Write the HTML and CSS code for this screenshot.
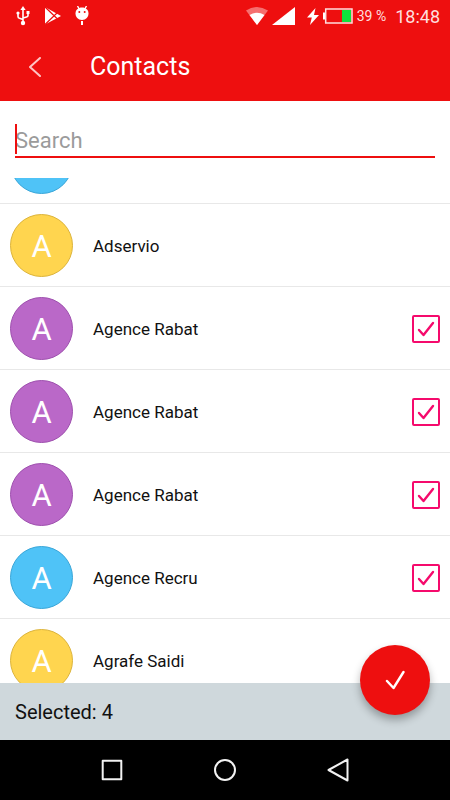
FILE: index.html
```
<!DOCTYPE html>
<html lang="en">
<head>
  <meta charset="UTF-8">
  <meta name="viewport" content="width=device-width, initial-scale=1.0">
  <title>Contacts</title>
  <link rel="stylesheet" href="styles.css">
</head>
<body>
  <header class="header">
    <!-- Status bar -->
    <div class="status-bar">
      <div class="status-left">
        <svg width="14" height="20" viewBox="0 0 14 20" fill="none" stroke="#fff" stroke-width="1.6">
          <path d="M7 3v14M2 7.500v3q0 1.500 1.500 1.800L7 13.500M12 7v2.500q0 1.200-1.500 1.500L7 12"/>
          <path d="M7 0l2.600 4H4.400z" fill="#fff" stroke="none"/>
          <circle cx="7" cy="17" r="2.200" fill="#fff" stroke="none"/>
          <circle cx="2" cy="7" r="1.600" fill="#fff" stroke="none"/>
          <path d="M10.500 5h3v3h-3z" fill="#fff" stroke="none"/>
        </svg>
        <svg width="17" height="20" viewBox="0 0 17 20">
          <path d="M1 1v17.500L17 10z" fill="#fff"/>
          <path d="M1 1l12 11.500M1 18.500L13 7" stroke="#ee0f0f" stroke-width="1.200"/>
        </svg>
        <svg width="14" height="20" viewBox="0 0 14 20">
          <path d="M2.500 0l2 3.500M11.500 0l-2 3.500" stroke="#fff" stroke-width="1.400"/>
          <path d="M7 1.500c4 0 6.500 2.500 6.500 6S11 14 7 14 .5 11 .5 7.500s2.500-6 6.500-6z" fill="#fff"/>
          <path d="M6 15h2v4H6z" fill="#fff"/>
          <circle cx="4.300" cy="6" r="1" fill="#ee0f0f"/>
          <circle cx="9.700" cy="6" r="1" fill="#ee0f0f"/>
        </svg>
      </div>
      <div class="status-right">
        <svg width="22" height="18" viewBox="0 0 22 18">
          <path d="M0 3.500Q11-3.500 22 3.500L11 18z" fill="#fff" opacity=".4"/>
          <path d="M3.500 8Q11 3.500 18.500 8L11 18z" fill="#fff"/>
        </svg>
        <svg width="23" height="18" viewBox="0 0 23 18">
          <path d="M23 0v18H0z" fill="#fff"/>
        </svg>
        <svg class="bolt" width="12" height="17" viewBox="0 0 12 17">
          <path d="M8.500 0L0 9.500h4.800L3 17l9-10H7z" fill="#fff"/>
        </svg>
        <svg width="30" height="16" viewBox="0 0 30 16">
          <path d="M0 4.500h3v7H0z" fill="#fff"/>
          <path d="M19 2h9v12h-9z" fill="#10e23c"/>
          <path d="M2.700 1h26.300v14H2.700z" fill="none" stroke="#ffdede" stroke-width="1.500"/>
        </svg>
        <span class="battery">39 %</span>
        <span class="time">18:48</span>
      </div>
    </div>
    <div class="toolbar">
      <button class="back" type="button" aria-label="Back">
        <svg width="12" height="20" viewBox="0 0 12 20" fill="none" stroke="#ffc4c4" stroke-width="2" stroke-linecap="round" stroke-linejoin="round">
          <path d="M11 1L1 10l10 9"/>
        </svg>
      </button>
      <h1>Contacts</h1>
    </div>
  </header>

  <div class="search">
    <div class="search-field">
      <input type="text" placeholder="Search" aria-label="Search">
    </div>
  </div>

  <!-- Contact list -->
  <main class="contacts">
    <ul class="contact-list">
      <li class="contact">
        <span class="avatar blue"></span>
      </li>
      <li class="contact">
        <span class="avatar yellow">A</span>
        <span class="name">Adservio</span>
      </li>
      <li class="contact">
        <span class="avatar purple">A</span>
        <label class="name" for="contact1">Agence Rabat</label>
        <span class="check">
          <input type="checkbox" id="contact1" checked>
          <svg viewBox="0 0 28 28"><path d="M7 15l4.500 5L21 8"/></svg>
        </span>
      </li>
      <li class="contact">
        <span class="avatar purple">A</span>
        <label class="name" for="contact2">Agence Rabat</label>
        <span class="check">
          <input type="checkbox" id="contact2" checked>
          <svg viewBox="0 0 28 28"><path d="M7 15l4.500 5L21 8"/></svg>
        </span>
      </li>
      <li class="contact">
        <span class="avatar purple">A</span>
        <label class="name" for="contact3">Agence Rabat</label>
        <span class="check">
          <input type="checkbox" id="contact3" checked>
          <svg viewBox="0 0 28 28"><path d="M7 15l4.500 5L21 8"/></svg>
        </span>
      </li>
      <li class="contact">
        <span class="avatar blue">A</span>
        <label class="name" for="contact4">Agence Recru</label>
        <span class="check">
          <input type="checkbox" id="contact4" checked>
          <svg viewBox="0 0 28 28"><path d="M7 15l4.500 5L21 8"/></svg>
        </span>
      </li>
      <li class="contact">
        <span class="avatar yellow">A</span>
        <span class="name">Agrafe Saidi</span>
      </li>
    </ul>
  </main>

  <div class="selected-bar">
    <span>Selected: 4</span>
    <button class="fab" type="button" aria-label="Confirm">
      <svg width="20" height="20" viewBox="0 0 20 20" fill="none" stroke="#fff" stroke-width="2.400" stroke-linecap="round" stroke-linejoin="round">
        <path d="M2 11l6.500 7L18.500 2"/>
      </svg>
    </button>
  </div>

  <!-- Android navigation -->
  <nav class="nav-bar">
    <button type="button" aria-label="Recent apps">
      <svg width="24" height="24" viewBox="0 0 24 24"><path d="M2.700 2.700h18.600v18.600H2.700z"/></svg>
    </button>
    <button type="button" aria-label="Home">
      <svg width="24" height="24" viewBox="0 0 24 24"><circle cx="12" cy="12" r="10"/></svg>
    </button>
    <button type="button" aria-label="Back">
      <svg width="24" height="24" viewBox="0 0 24 24"><path d="M21.500 1.500v21L2.500 12z"/></svg>
    </button>
  </nav>
</body>
</html>
```
FILE: styles.css
```
* {
  box-sizing: border-box;
}

body {
  margin: 0;
  height: 100vh;
  display: flex;
  flex-direction: column;
  font-family: Roboto, sans-serif;
  background: #fff;
  color: #111;
}

button {
  padding: 0;
  border: none;
  background: none;
  cursor: pointer;
}

svg {
  display: block;
}

.header {
  background: #ee0f0f;
  color: #fff;
}

/* Status bar */
.status-bar {
  display: flex;
  justify-content: space-between;
  align-items: center;
  height: 32px;
  padding: 0 10px 0 16px;
}

.status-left {
  display: flex;
  gap: 14px;
}

.status-right {
  display: flex;
  align-items: center;
  gap: 4px;
  color: #ffdede;
}

.bolt {
  margin-left: 8px;
}

.battery {
  font-size: 14px;
}

.time {
  margin-left: 5px;
  font-size: 18px;
}

/* Toolbar */
.toolbar {
  display: flex;
  align-items: center;
  height: 69px;
}

.back {
  display: flex;
  justify-content: center;
  width: 70px;
}

.toolbar h1 {
  margin: 0 0 0 20px;
  font-size: 25px;
  font-weight: 400;
}

/* Search */
.search {
  padding: 20px 15px;
}

.search-field {
  position: relative;
  border-bottom: 2px solid #ee0f0f;
}

/* text cursor */
.search-field::before {
  content: "";
  position: absolute;
  left: 0;
  top: 3px;
  width: 2px;
  height: 30px;
  background: #ee0f0f;
}

.search input {
  display: block;
  width: 100%;
  height: 35px;
  padding: 4px 0 0;
  border: none;
  outline: none;
  background: none;
  font-family: inherit;
  font-size: 22px;
}

.search input::placeholder {
  color: #9b9b9b;
}

/* Contact list */
.contacts {
  flex: 1;
  min-height: 0;
  overflow: hidden;
}

/* scrolled part way into the first row */
.contact-list {
  margin: -57px 0 0;
  padding: 0;
  list-style: none;
}

.contact {
  display: flex;
  align-items: center;
  gap: 20px;
  padding: 10px 10px 9px;
  border-bottom: 1px solid #e8e8e8;
}

.avatar {
  width: 63px;
  height: 63px;
  border: 1px solid;
  border-radius: 50%;
  color: #fff;
  font-size: 31px;
  line-height: 63px;
  text-align: center;
}

.blue {
  background: #4fc3f7;
  border-color: #3aa6d8;
}

.yellow {
  background: #ffd54f;
  border-color: #dcb43c;
}

.purple {
  background: #ba68c8;
  border-color: #9e50ae;
}

.name {
  flex: 1;
  font-size: 17px;
}

.check {
  position: relative;
  width: 28px;
  height: 28px;
}

.check input {
  appearance: none;
  display: block;
  width: 28px;
  height: 28px;
  margin: 0;
  border: 2px solid #f50a6c;
  border-radius: 2px;
  outline: 0;
}

.check svg {
  position: absolute;
  inset: 0;
  fill: none;
  stroke: #f50a6c;
  stroke-width: 2.4;
  stroke-linecap: round;
  stroke-linejoin: round;
  pointer-events: none;
}

.check input:not(:checked) + svg {
  display: none;
}

/* Selected bar */
.selected-bar {
  position: relative;
  display: flex;
  align-items: center;
  height: 57px;
  padding: 0 15px;
  background: #cfd8dc;
  font-size: 20px;
}

.fab {
  position: absolute;
  right: 20px;
  bottom: 25px;
  display: flex;
  justify-content: center;
  align-items: center;
  width: 70px;
  height: 70px;
  border-radius: 50%;
  background: #ee0f0f;
  box-shadow: 0 5px 8px rgba(0, 0, 0, 0.3);
}

/* Android navigation */
.nav-bar {
  display: flex;
  justify-content: center;
  align-items: center;
  gap: 89px;
  height: 60px;
  background: #000;
}

.nav-bar svg {
  fill: none;
  stroke: #f2f2f2;
  stroke-width: 2;
  stroke-linejoin: round;
}
```
